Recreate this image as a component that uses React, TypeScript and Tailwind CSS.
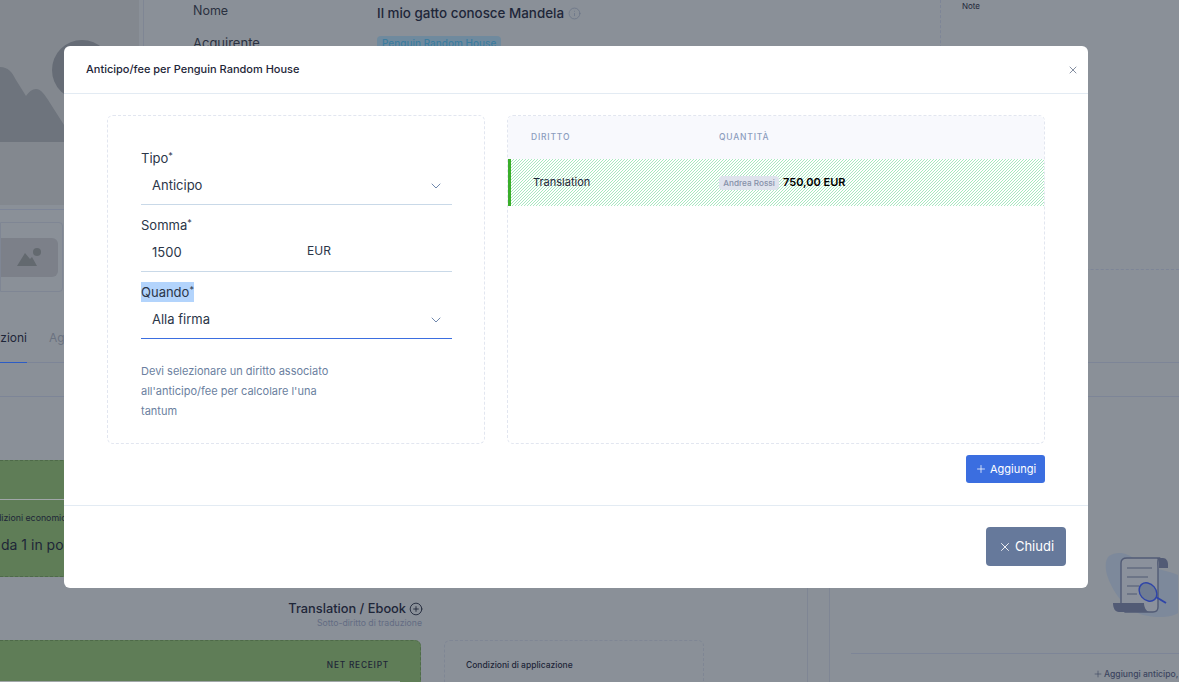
import { ChevronDown, Info, Plus, CirclePlus, X } from "lucide-react";

const font = "font-['Inter','Liberation_Sans',sans-serif]";

function Field({ label, selected, active, children }: { label: string; selected?: boolean; active?: boolean; children: React.ReactNode }) {
  return (
    <div className="mb-[10px]">
      <div className="h-[20px] flex items-center">
        <span className={`text-[13px] leading-[20px] text-[#2b3648] ${selected ? "bg-[#b3d4fc]" : ""}`}>
          {label}<sup className="text-[9px] top-[-4px]">*</sup>
        </span>
      </div>
      <div className={`h-[37px] flex items-center pl-[11px] pr-[8px] border-b text-[13px] text-[#2b3648] ${active ? "border-[#3b6ee0]" : "border-[#c9d9e8]"}`}>
        {children}
      </div>
    </div>
  );
}

function BackgroundPage() {
  return (
    <div className="h-[682px] bg-[#8a9098] text-[#1e2638] flex flex-col">
      {/* Top info */}
      <div className="h-[363px] flex shrink-0 border-b border-[#7d8597]">
        <div className="w-[144px] shrink-0 border-r border-[#7f8694] pr-[4px]">
          <div className="h-[205px] bg-[#83888f] overflow-hidden">
            <svg viewBox="0 0 139 205" className="w-full h-full">
              <circle cx="82" cy="70" r="30" fill="#666c76" />
              <path d="M0 67 C8 67 12 72 16 80 L26 96 C29 92 32 89 36 89 C41 89 45 95 50 103 L64 125 L64 142 L0 142 Z" fill="#6e747d" />
            </svg>
          </div>
          <div className="h-[5px] border-b border-[#7d8597]" />
          <div className="mt-[12px] h-[70px] w-[63px] border border-[#7f8694] rounded-r-[4px] flex items-center">
            <div className="w-[57px] h-[39px] bg-[#7c8089] rounded-r-[6px] flex items-center justify-center">
              <svg viewBox="0 0 26 20" className="w-[26px] h-[20px]" fill="#63696f">
                <circle cx="20" cy="5" r="4" />
                <path d="M0 19 L8 6 L13 12 L15 10 L20 19 Z" />
              </svg>
            </div>
          </div>
          <div className="mt-[37px] h-[34px] flex items-start gap-[22px] text-[12px] leading-[18px] whitespace-nowrap">
            <div className="w-[27px] h-[34px] shrink-0 overflow-hidden flex justify-end border-b border-[#2c5cc5]">zioni</div>
            <span className="text-[#6a7280]">Aggiornamenti</span>
          </div>
        </div>
        <div className="w-[796px] shrink-0 pl-[49px] text-[12.5px]">
          <div className="flex h-[36px] items-start">
            <span className="w-[184px] mt-[2px] text-[#2a3140]">Nome</span>
            <span className="flex items-center gap-[4px] mt-[3px] text-[13.4px] font-medium text-[#1e2638]">
              Il mio gatto conosce Mandela <Info className="w-[13px] h-[13px] text-[#6b7588]" strokeWidth={1.5} />
            </span>
          </div>
          <div className="flex">
            <span className="w-[184px] -mt-[2px] text-[13px] text-[#2a3140]">Acquirente</span>
            <span className="px-[5px] rounded-[4px] bg-[#6f8a9e] text-[#3c7c9e] text-[10px] font-medium h-[16px]">Penguin Random House</span>
          </div>
        </div>
        <div className="flex-1 min-w-0">
          <div className="h-[270px] border-l border-dashed border-[#7d8597] border-b pl-[21px] text-[8px]">Note</div>
        </div>
      </div>
      <div className="h-[34px] shrink-0 border-b border-[#7d8597]" />
      {/* Lower content */}
      <div className="flex flex-1 min-h-0 overflow-hidden">
        <div className="w-[808px] shrink-0 border-r border-[#7f8694]">
          <div className="mt-[63px] w-[300px] h-[117px] bg-[#5f7d57] border border-l-0 border-dashed border-[#4e6a49] rounded-r-[6px] flex flex-col overflow-hidden">
            <div className="h-[39px] shrink-0 border-b border-[#a0a6a8]" />
            <div className="-ml-[21px] mt-[12px] text-[8.8px] leading-[12px] whitespace-nowrap">Condizioni economiche</div>
            <div className="ml-[1px] mt-[11px] text-[14px] leading-[20px] whitespace-nowrap">da 1 in poi</div>
          </div>
          <div className="mt-[24px] pr-[384px] flex flex-col items-end">
            <div className="flex items-center gap-[3px] text-[12.8px] leading-[16px] font-medium text-[#1e2638]">
              Translation / Ebook <CirclePlus className="w-[14px] h-[14px]" strokeWidth={1.5} />
            </div>
            <div className="mr-[1px] text-[8.7px] leading-[10px] text-[#636c83] mt-[1px]">Sotto-diritto di traduzione</div>
          </div>
          <div className="mt-[12px] flex gap-[23px]">
            <div className="w-[421px] h-[60px] bg-[#5f7d57] border border-l-0 border-dashed border-[#4e6a49] rounded-r-[6px] flex flex-col items-end">
              <div className="pr-[31px] pt-[17px] text-[8.3px] leading-[14px] font-medium tracking-[0.8px]">NET RECEIPT</div>
              <div className="w-[400px] mr-[20px] mt-[9px] border-b border-[#a0a6a8]" />
            </div>
            <div className="w-[260px] h-[60px] border border-dashed border-[#7f8694] rounded-[6px] pl-[21px] pt-[17px] text-[8.5px] leading-[14px] font-medium">
              Condizioni di applicazione
            </div>
          </div>
        </div>
        <div className="w-[22px] shrink-0 border-r border-[#7f8694]" />
        <div className="flex-1 min-w-0">
          <div className="h-[257px] pl-[21px] flex flex-col">
            <div className="mt-[156px] ml-[254px] w-[73px] h-[65px] shrink-0">
              <svg viewBox="0 0 73 65" className="w-[73px] h-[65px]">
                <path d="M4 3 C12 -2 22 -1 32 8 C42 16 60 16 73 22 L73 60 C66 65 50 65 38 62 C20 56 8 40 2 22 C0 14 0 7 4 3 Z" fill="#7d899b" />
                <path d="M16 50 L16 10 C16 7 18 5 22 5 L54 5 C52 7 53 10 53 15 L53 54 C53 57 51 59 48 59 L20 59 Z" fill="#8b919c" stroke="#525b75" strokeWidth="1.4" />
                <path d="M52 5 L58 5 C61 5 63 8 63 11 L63 15 L54 15 C54 11 54 7 52 5 Z" fill="#525b75" />
                <path d="M8 50 L39 50 C39 54 41 58 44 59 L14 59 C10 59 8 55 8 50 Z" fill="#525b75" />
                <path d="M22 15 L47 15 M22 24 L43 24 M22 33 L34 33 M22 41 L32 41" stroke="#646c80" strokeWidth="1.3" />
                <ellipse cx="43" cy="39" rx="8" ry="10" fill="#6f7c92" stroke="#2f45a8" strokeWidth="1.4" transform="rotate(-40 43 39)" />
                <path d="M51 44 L61 50" stroke="#2f45a8" strokeWidth="2" />
              </svg>
            </div>
            <div className="mt-[35px] border-b border-[#7d8597] shrink-0" />
            <div className="mt-[13px] ml-[242px] flex items-center gap-[1px] text-[8.6px] leading-[14px] whitespace-nowrap text-[#3d4660] font-medium">
              <Plus className="w-[10px] h-[10px] shrink-0" strokeWidth={1.5} /> Aggiungi anticipo, fee
            </div>
          </div>
        </div>
      </div>
    </div>
  );
}

export default function App() {
  return (
    <div className={`relative h-[682px] w-[1179px] overflow-hidden ${font}`}>
      <BackgroundPage />

      {/* Modal */}
      <div className="absolute left-[64px] top-[46px] w-[1024px] h-[542px] bg-white rounded-[6px] flex flex-col">
        <div className="h-[48px] shrink-0 border-b border-[#e3ebf3] flex items-center justify-between pl-[22px] pr-[9px]">
          <span className="text-[11px] font-medium text-[#1e2638]">Anticipo/fee per Penguin Random House</span>
          <X className="w-[12px] h-[12px] text-[#5c6a82]" strokeWidth={1.5} />
        </div>

        <div className="h-[412px] shrink-0 border-b border-[#e3ebf3] pl-[43px] pr-[43px] pt-[21px]">
          <div className="flex gap-[22px] h-[329px]">
            <div className="w-[378px] shrink-0 border border-dashed border-[#e2e6f0] rounded-[6px] pl-[33px] pr-[32px] pt-[32px]">
              <Field label="Tipo">
                <span className="flex-1">Anticipo</span>
                <ChevronDown className="w-[16px] h-[16px] text-[#7088ad]" strokeWidth={1.5} />
              </Field>
              <Field label="Somma">
                <span className="w-[155px]">1500</span>
                <span className="text-[12px] -mt-[5px]">EUR</span>
              </Field>
              <Field label="Quando" selected active>
                <span className="flex-1">Alla firma</span>
                <ChevronDown className="w-[16px] h-[16px] text-[#7088ad]" strokeWidth={1.5} />
              </Field>
              <p className="mt-[22px] w-[200px] text-[11px] leading-[20px] text-[#6b7fa0]">
                Devi selezionare un diritto associato all'anticipo/fee per calcolare l'una tantum
              </p>
            </div>

            <div className="flex-1 min-w-0 border border-dashed border-[#e2e6f0] rounded-[6px] overflow-hidden">
              <div className="h-[43px] pb-[1px] bg-[#f8f9fd] flex items-center text-[8.5px] tracking-[0.8px] text-[#8c9dbd] font-medium">
                <span className="w-[211px] pl-[23px]">DIRITTO</span>
                <span>QUANTITÀ</span>
              </div>
              <div className="h-[47px] flex items-center border-l-[3px] border-[#3aae2a] bg-[repeating-linear-gradient(135deg,#a8e8c0_0,#a8e8c0_0.7px,#ffffff_0.7px,#ffffff_2.1213px)]">
                <span className="w-[208px] pl-[22px] text-[11px] text-[#1e2638]">Translation</span>
                <span className="h-[14px] w-[60px] shrink-0 text-center rounded-[4px] bg-[#dfe3ed] text-[#8590a8] text-[8.2px] leading-[14px] font-medium whitespace-nowrap">Andrea Rossi</span>
                <span className="ml-[4px] text-[11px] font-semibold text-black">750,00 EUR</span>
              </div>
            </div>
          </div>
          <div className="flex justify-end mt-[11px]">
            <button className="h-[28px] w-[79px] rounded-[3px] bg-[#3b6ee0] text-white text-[11px] flex items-center justify-center gap-[3px]">
              <Plus className="w-[12px] h-[12px]" strokeWidth={1.5} /> Aggiungi
            </button>
          </div>
        </div>

        <div className="flex-1 flex items-start justify-end pt-[21px] pr-[22px]">
          <button className="h-[39px] w-[80px] rounded-[4px] bg-[#66799b] text-white text-[13px] flex items-center justify-center gap-[3px]">
            <X className="w-[14px] h-[14px]" strokeWidth={1.5} /> Chiudi
          </button>
        </div>
      </div>
    </div>
  );
}
